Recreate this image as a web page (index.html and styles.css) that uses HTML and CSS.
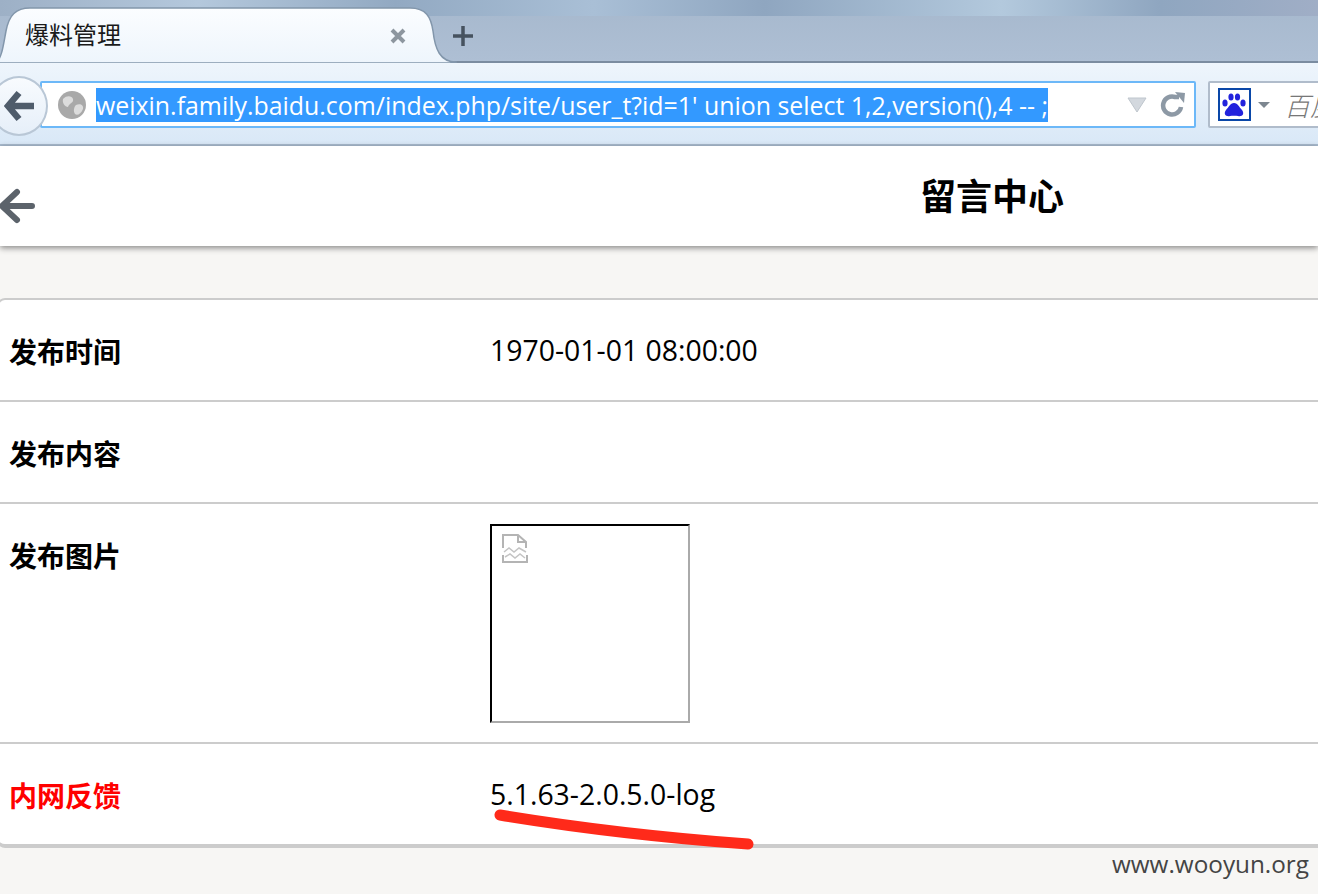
FILE: index.html
```html
<!DOCTYPE html>
<html lang="zh-CN">
<head>
  <meta charset="UTF-8" />
  <title>爆料管理</title>
  <link rel="stylesheet" href="styles.css">
</head>
<body>
  <div class="browser">
    <div class="tabstrip">
      <svg class="tab-shape" width="460" height="56" viewBox="0 0 460 56">
        <defs>
          <linearGradient id="tabfill" x1="0" y1="0" x2="0" y2="1">
            <stop offset="0" stop-color="#fbfdff"/>
            <stop offset="1" stop-color="#eef5fc"/>
          </linearGradient>
        </defs>
        <path d="M-4 56 C2 50 3 40 6 24 C9 8 16 1 30 1 L410 1 C426 1 431 10 433 24 C435 42 440 55 456 55 L456 56 Z" fill="url(#tabfill)" stroke="#8296ab" stroke-width="1.5"/>
      </svg>
      <div class="tab">
        <span class="tab-title">爆料管理</span>
        <svg class="tab-close" width="18" height="18" viewBox="0 0 18 18">
          <path d="M3 3 L15 15 M15 3 L3 15" stroke="#8d969f" stroke-width="4"/>
        </svg>
      </div>
      <svg class="tab-new" width="22" height="22" viewBox="0 0 22 22">
        <path d="M11 1 V21 M1 11 H21" stroke="#46525f" stroke-width="3.5"/>
      </svg>
    </div>

    <div class="navbar">
      <div class="back-btn">
        <svg width="32" height="32" viewBox="0 0 32 32">
          <path d="M15 3 L4 16 L15 29 M5 16 H30" fill="none" stroke="#4f5c6b" stroke-width="6.5"/>
        </svg>
      </div>
      <div class="urlbar">
        <svg class="globe" width="30" height="30" viewBox="0 0 30 30">
          <circle cx="15" cy="15" r="14" fill="#a9a9a9"/>
          <path d="M6 9 C10 5 15 6 16 9 C17 13 12 13 11 17 C8 17 5 13 6 9 Z M19 15 C23 13 27 15 26 19 C24 24 20 26 18 24 C16 21 17 17 19 15 Z" fill="#dcdcdc"/>
        </svg>
        <div class="url-text"><span class="selected">weixin.family.baidu.com/index.php/site/user_t?id=1' union select 1,2,version(),4 -- ;</span></div>
        <svg class="drop" width="20" height="16" viewBox="0 0 20 16">
          <path d="M1 1 H19 L10 15 Z" fill="#d3d8de" stroke="#bfc6cd"/>
        </svg>
        <svg class="reload" width="26" height="26" viewBox="0 0 26 26">
          <path d="M21 15 A9 9 0 1 1 15 5 H19" fill="none" stroke="#8d99a5" stroke-width="4.5"/>
          <path d="M15 0 L25 1 L24 11 Z" fill="#8d99a5"/>
        </svg>
      </div>
      <div class="searchbar">
        <div class="engine">
          <svg width="26" height="26" viewBox="0 0 26 26">
            <ellipse cx="4" cy="11" rx="2.6" ry="3.6" fill="#2222dd"/>
            <ellipse cx="10" cy="5" rx="2.6" ry="3.6" fill="#2222dd"/>
            <ellipse cx="16.500" cy="5" rx="2.6" ry="3.6" fill="#2222dd"/>
            <ellipse cx="22" cy="11" rx="2.6" ry="3.6" fill="#2222dd"/>
            <path d="M13 11 C17 11 18 15 21 18 C24 22 21 25 17 24 C15 23.500 11 23.500 9 24 C5 25 2 22 5 18 C8 15 9 11 13 11 Z" fill="#2222dd"/>
          </svg>
        </div>
        <svg class="engine-caret" width="12" height="6" viewBox="0 0 12 6">
          <path d="M0 0 H12 L6 6 Z" fill="#7d8790"/>
        </svg>
        <span class="search-hint">百度</span>
      </div>
    </div>
  </div>

  <header class="page-head">
    <svg class="head-back" width="38" height="38" viewBox="0 0 38 38">
      <path d="M18 5 L3 19 L18 33 M4 19 H33" fill="none" stroke="#5c636b" stroke-width="6" stroke-linecap="round"/>
    </svg>
    <h1>留言中心</h1>
  </header>

  <main class="content">
    <div class="card">
      <div class="row">
        <div class="label">发布时间</div>
        <div class="value">1970-01-01 08:00:00</div>
      </div>
      <div class="row">
        <div class="label">发布内容</div>
        <div class="value"></div>
      </div>
      <div class="row row-image">
        <div class="label">发布图片</div>
        <div class="value">
          <div class="broken-img">
            <svg width="26" height="30" viewBox="0 0 26 30">
              <path d="M1 14 V1 H16 L24 8 V14 M16 1 V8 H24 M1 21 V28 H25 V21" fill="none" stroke="#b4b4b4" stroke-width="2"/>
              <path d="M2 18 L7 14 L12 18 L17 14 L24 18 M3 23 L8 20 L13 24 L18 20 L23 24" fill="none" stroke="#c4c4c4" stroke-width="1.500"/>
            </svg>
          </div>
        </div>
      </div>
      <div class="row">
        <div class="label label-red">内网反馈</div>
        <div class="value">5.1.63-2.0.5.0-log</div>
      </div>
    </div>
    <div class="watermark">www.wooyun.org</div>
  </main>

  <svg class="scribble" width="270" height="50" viewBox="0 0 270 50">
    <path d="M7 9 Q125 28.500 255 38" fill="none" stroke="#ff2a1a" stroke-width="11" stroke-linecap="round"/>
  </svg>
</body>
</html>
```

FILE: styles.css
```css
* {
  box-sizing: border-box;
}

html, body {
  margin: 0;
  height: 894px;
  overflow: hidden;
}

body {
  position: relative;
  background-color: #f7f6f4;
  font-family: "Open Sans", "Noto Sans CJK SC", sans-serif;
  color: #000;
}

.browser {
  height: 146px;
}

.tabstrip {
  position: relative;
  height: 63px;
  display: flex;
  align-items: flex-start;
  background:
    linear-gradient(90deg, #9db0c6, #b4c8dc 15%, #92a9c2 30%, #a9bfd6 45%, #8fa6c0 58%, #b3c9dd 76%, #8fa6c0 88%, #a0aec6) 0 0 / 100% 16px no-repeat,
    linear-gradient(#a6b8cd, #aebfd4);
  border-bottom: 2px solid #7b8ca0;
}

.tab-shape {
  position: absolute;
  left: 0;
  top: 7px;
}

.tab {
  position: relative;
  width: 441px;
  height: 61px;
  padding: 18px 34px 0 25px;
  display: flex;
  align-items: flex-start;
  justify-content: space-between;
}

.tab-title {
  font-size: 24px;
  line-height: 34px;
  color: #1a1a1a;
}

.tab-close {
  margin-top: 9px;
}

.tab-new {
  position: relative;
  margin: 25px 0 0 11px;
}

.navbar {
  position: relative;
  height: 83px;
  padding: 18px 0 0 40px;
  display: flex;
  align-items: flex-start;
  gap: 12px;
  background: linear-gradient(#eef5fc, #d9e8f7);
  border-bottom: 2px solid #a9bbcf;
}

.back-btn {
  position: absolute;
  left: -10px;
  top: 13px;
  width: 58px;
  height: 60px;
  padding-left: 12px;
  display: flex;
  align-items: center;
  border: 2px solid #b9c7d6;
  border-radius: 50%;
  background: linear-gradient(#f8fbfe, #e6eff9);
  z-index: 1;
}

.urlbar {
  flex: none;
  width: 1156px;
  height: 47px;
  padding: 0 8px 0 15px;
  display: flex;
  align-items: center;
  background-color: #fff;
  border: 2px solid #6cb8f8;
  border-radius: 2px;
}

.globe {
  flex: none;
}

.url-text {
  flex: 1;
  margin-left: 9px;
  font-size: 24.900px;
  line-height: 34px;
  white-space: nowrap;
}

.selected {
  display: inline-block;
  background-color: #3399ff;
  color: #fff;
}

.drop {
  margin-right: 13px;
}

.searchbar {
  flex: none;
  width: 130px;
  height: 47px;
  padding-left: 8px;
  display: flex;
  align-items: center;
  background-color: #fff;
  border: 2px solid #b0bccb;
  border-radius: 2px;
}

.engine {
  width: 33px;
  height: 33px;
  display: flex;
  align-items: center;
  justify-content: center;
  border: 2px solid #0a47a8;
}

.engine-caret {
  margin-left: 7px;
}

.search-hint {
  margin-left: 14px;
  font-size: 26px;
  font-style: italic;
  font-weight: 300;
  color: #777;
  white-space: nowrap;
}

.page-head {
  position: relative;
  height: 100px;
  padding-left: 920px;
  background-color: #fff;
  box-shadow: 0 2px 6px rgba(0, 0, 0, 0.45);
}

.head-back {
  position: absolute;
  left: -1px;
  top: 41px;
}

.page-head h1 {
  margin: 0;
  font-size: 36px;
  line-height: 102px;
  font-weight: 700;
}

.content {
  position: relative;
  height: 648px;
  padding-top: 52px;
}

.card {
  margin: 0 -10px 0 -3px;
  background-color: #fff;
  border: 2px solid #ccc;
  border-bottom-width: 4px;
  border-radius: 8px;
}

.row {
  display: flex;
  min-height: 102px;
  padding: 20px 0 0 10px;
  border-bottom: 2px solid #ccc;
}

.row:last-child {
  min-height: 100px;
  border-bottom: none;
}

.row-image {
  min-height: 240px;
}

.label {
  width: 481px;
  font-size: 28px;
  line-height: 64px;
  font-weight: 700;
}

.label-red {
  color: #f00;
}

.value {
  font-size: 28.400px;
  line-height: 60px;
  white-space: nowrap;
}

.broken-img {
  width: 200px;
  height: 199px;
  padding: 8px 0 0 10px;
  border: 2px solid;
  border-color: #000 #aaa #aaa #000;
  line-height: 0;
}

.watermark {
  margin-top: -1px;
  padding-right: 9px;
  text-align: right;
  font-size: 24.300px;
  line-height: 34px;
  color: #444;
}

.scribble {
  position: absolute;
  left: 493px;
  top: 806px;
}
```
